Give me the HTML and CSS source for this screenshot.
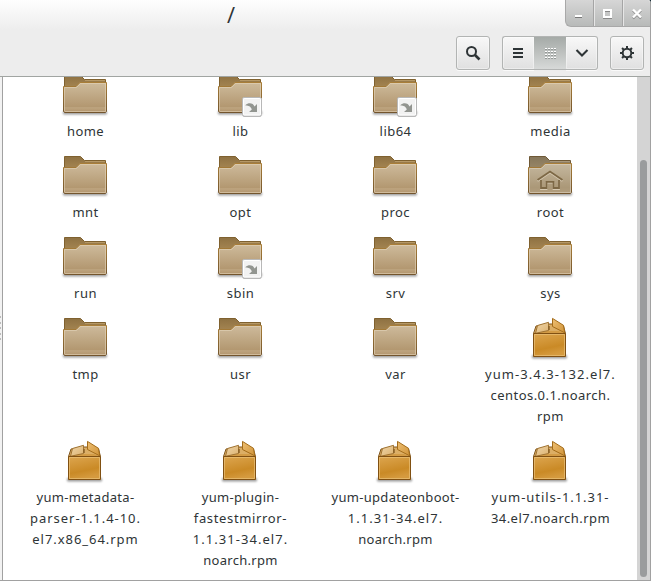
FILE: index.html
```html
<!DOCTYPE html>
<html lang="en">
<head>
<meta charset="utf-8">
<title>/</title>
<link rel="stylesheet" href="styles.css">
</head>
<body>
<svg class="defs" width="0" height="0" aria-hidden="true">
  <defs>
    <linearGradient id="back" x2="0" y2="1"><stop offset="0" stop-color="#8e7142"/><stop offset=".4" stop-color="#a88854"/></linearGradient>
    <linearGradient id="back-home" x2="0" y2="1"><stop offset="0" stop-color="#85765a"/><stop offset=".4" stop-color="#9a8868"/></linearGradient>
    <linearGradient id="front" x2="0" y2="1"><stop offset="0" stop-color="#cebb9c"/><stop offset=".8" stop-color="#b39871"/><stop offset=".84" stop-color="#bda47f"/><stop offset="1" stop-color="#b1936b"/></linearGradient>
    <linearGradient id="front-home" x2="0" y2="1"><stop offset="0" stop-color="#c5b89f"/><stop offset=".8" stop-color="#ab9878"/><stop offset="1" stop-color="#b29e7e"/></linearGradient>
    <linearGradient id="edge" x2="0" y2="1"><stop offset="0" stop-color="#a97e38"/><stop offset="1" stop-color="#73552d"/></linearGradient>
    <linearGradient id="box" x2=".3" y2="1"><stop offset="0" stop-color="#dda650"/><stop offset=".7" stop-color="#ca8a26"/><stop offset="1" stop-color="#d59a3e"/></linearGradient>
    <linearGradient id="flap" x2="1" y2="1"><stop offset="0" stop-color="#efd5a8"/><stop offset="1" stop-color="#dcb271"/></linearGradient>
    <linearGradient id="flap-right" x2="1" y2="1"><stop offset="0" stop-color="#eebf72"/><stop offset="1" stop-color="#cf9339"/></linearGradient>
    <filter id="soft" x="-20%" y="-100%" width="140%" height="300%"><feGaussianBlur stdDeviation="1"/></filter>
    <symbol id="folder" viewBox="0 0 48 48">
      <rect x="2" y="41" width="44" height="3.5" rx="1" fill="#000" opacity=".4" filter="url(#soft)"/>
      <path d="M3.500 40V5.500H19.500L23.500 9.500H44.500V40Z" fill="url(#back)" stroke="#7f612f"/>
      <path d="M24 10.500H44" stroke="#b69865"/>
      <path d="M2.500 16.500H15L19 12.500H45.500V41.500L44.500 42.500H3.500L2.500 41.500Z" fill="url(#front)" stroke="url(#edge)"/>
      <path d="M3.500 41V17.500H15.500L19.500 13.500H44.500V41.500H4" fill="none" stroke="#e3d3b9" opacity=".6"/>
    </symbol>
    <symbol id="home" viewBox="0 0 48 48">
      <rect x="2" y="41" width="44" height="3.500" rx="1" fill="#000" opacity=".4" filter="url(#soft)"/>
      <path d="M3.500 40V5.500H19.500L23.500 9.500H44.500V40Z" fill="url(#back-home)" stroke="#6f5936"/>
      <path d="M24 10.500H44" stroke="#a8977a"/>
      <path d="M2.500 16.500H15L19 12.500H45.500V41.500L44.500 42.500H3.500L2.500 41.500Z" fill="url(#front-home)" stroke="url(#edge)"/>
      <path d="M3.500 41V17.500H15.500L19.500 13.500H44.500V41.500H4" fill="none" stroke="#ddd2bf" opacity=".6"/>
      <g fill="none" stroke-width="1.800">
        <path d="M11.500 30 24 21.500 36.500 30M15 29.500V38H20.500V31.500H27.500V38H33V29.500" stroke="#d6c9b2"/>
        <path d="M11.500 29 24 20.500 36.500 29M15 29V37H20.500V30.800H27.500V37H33V29" stroke="#7d6845"/>
      </g>
    </symbol>
    <symbol id="package" viewBox="0 0 48 48">
      <rect x="6" y="42" width="35" height="3.500" rx="1" fill="#000" opacity=".4" filter="url(#soft)"/>
      <path d="M7.500 20.500 10 13 22 11H28L37.500 13 39.500 20.500Z" fill="#dcae65" stroke="#80571f"/>
      <path d="M10 20 16 18H33L38 20Z" fill="#d39b45"/>
      <path d="M9.500 20.300 11.500 12.500 22.500 9.300V17.500Z" fill="url(#flap)" stroke="#a17433"/>
      <path d="M23.100 13V17" stroke="#76501c"/>
      <path d="M26.500 5.400 37.500 12.300 38.700 19.800 26.500 13.500Z" fill="url(#flap-right)" stroke="#a36b18"/>
      <path d="M7.500 20.500H39.500V43.500H7.500Z" fill="url(#box)" stroke="#805012"/>
      <path d="M8.500 21.500H38.500V42.500H8.500Z" fill="none" stroke="#edc47e" opacity=".65"/>
    </symbol>
    <symbol id="link" viewBox="0 0 48 48">
      <rect x="26.500" y="28.500" width="19" height="18.500" rx="2" fill="#777" opacity=".5"/>
      <rect x="26.500" y="27.500" width="19" height="18.500" rx="1.500" fill="#f2f2f2" stroke="#b8b8b8"/>
      <rect x="27.500" y="28.500" width="17" height="16.500" rx="1" fill="none" stroke="#fff"/>
      <path d="M29.500 35C32.500 32 37.500 33 38.500 36.500L41 34V42H33L35.800 39.500C34.500 36 32 35.500 29.500 35.600Z" fill="#929590"/>
    </symbol>
  </defs>
</svg>

<div class="window">
  <header class="header">
    <div class="titlebar">
      <h1 class="title">/</h1>
      <div class="controls">
        <button class="control" aria-label="Minimize"><svg width="28" height="27"><path d="M9 17.500H16" stroke="#777"/><path d="M9 16H16" stroke="#fff" stroke-width="2"/></svg></button>
        <button class="control" aria-label="Maximize"><svg width="28" height="27" fill="none" stroke-width="2"><path d="M9 11H16V18H9Z" stroke="#888"/><path d="M9 10H16V17H9Z" stroke="#fff"/></svg></button>
        <button class="control" aria-label="Close"><svg width="28" height="27" stroke-width="2.400"><path d="M9 10.500 17 18.500M17 10.500 9 18.500" stroke="#888"/><path d="M9 9.500 17 17.500M17 9.500 9 17.500" stroke="#fff"/></svg></button>
      </div>
    </div>
    <div class="toolbar">
      <button class="tool" aria-label="Search"><svg width="16" height="16" fill="none" stroke="#2e3436"><circle cx="6.500" cy="6.500" r="4.500" stroke-width="2"/><path d="M10 10 14.500 14.500" stroke-width="2.600"/></svg></button>
      <div class="group">
        <button class="tool" aria-label="List view"><svg width="16" height="16" stroke="#2e3436" stroke-width="2"><path d="M2 4H12M2 8H12M2 12H12"/></svg></button>
        <button class="tool active" aria-label="Icon view"><svg width="16" height="16" stroke-width="1" stroke-dasharray="2 1"><path d="M3 4.500H14M3 7.500H14M3 10.500H14M3 13.500H14" stroke="#949997"/><path d="M3 3.500H14M3 6.500H14M3 9.500H14M3 12.500H14" stroke="#fff"/></svg></button>
        <button class="tool" aria-label="View options"><svg width="16" height="16" fill="none" stroke="#2e3436" stroke-width="2.100"><path d="M2.500 5 8 10.500 13.500 5"/></svg></button>
      </div>
      <button class="tool" aria-label="Settings"><svg width="16" height="16" fill="none" stroke="#2e3436" stroke-width="2"><circle cx="8" cy="8" r="4.300"/><path d="M8 1V4M8 12V15M1 8H4M12 8H15M3.050 3.050 5 5M11 11 12.950 12.950M12.950 3.050 11 5M5 11 3.050 12.950"/></svg></button>
    </div>
  </header>

  <div class="body">
    <div class="pane-handle"><i></i><i></i><i></i><i></i><i></i></div>
    <main class="view">
      <ul class="files">
        <li class="file"><svg><use href="#folder"/></svg><span>home</span></li>
        <li class="file"><svg><use href="#folder"/><use href="#link"/></svg><span>lib</span></li>
        <li class="file"><svg><use href="#folder"/><use href="#link"/></svg><span>lib64</span></li>
        <li class="file"><svg><use href="#folder"/></svg><span>media</span></li>
        <li class="file"><svg><use href="#folder"/></svg><span>mnt</span></li>
        <li class="file"><svg><use href="#folder"/></svg><span>opt</span></li>
        <li class="file"><svg><use href="#folder"/></svg><span>proc</span></li>
        <li class="file"><svg><use href="#home"/></svg><span>root</span></li>
        <li class="file"><svg><use href="#folder"/></svg><span>run</span></li>
        <li class="file"><svg><use href="#folder"/><use href="#link"/></svg><span>sbin</span></li>
        <li class="file"><svg><use href="#folder"/></svg><span>srv</span></li>
        <li class="file"><svg><use href="#folder"/></svg><span>sys</span></li>
        <li class="file"><svg><use href="#folder"/></svg><span>tmp</span></li>
        <li class="file"><svg><use href="#folder"/></svg><span>usr</span></li>
        <li class="file"><svg><use href="#folder"/></svg><span>var</span></li>
        <li class="file"><svg><use href="#package"/></svg><span class="long"><b class="wide">yum-3.4.3-132.el7.</b><br>centos.0.1.noarch.<br>rpm</span></li>
        <li class="file"><svg><use href="#package"/></svg><span class="long"><b class="tight">yum-metadata-</b><br><b class="loose">parser-1.1.4-10.</b><br><b class="loose">el7.x86_64.rpm</b></span></li>
        <li class="file"><svg><use href="#package"/></svg><span class="long"><b class="tight">yum-plugin-</b><br><b class="mid">fastestmirror-</b><br><b class="wide">1.1.31-34.el7.</b><br><b class="tight">noarch.rpm</b></span></li>
        <li class="file"><svg><use href="#package"/></svg><span class="long"><b class="tight">yum-updateonboot-</b><br><b class="wide">1.1.31-34.el7.</b><br><b class="tight">noarch.rpm</b></span></li>
        <li class="file"><svg><use href="#package"/></svg><span class="long"><b class="loose">yum-utils-1.1.31-</b><br>34.el7.noarch.rpm</span></li>
      </ul>
    </main>
    <div class="scrollbar"><div class="thumb"></div></div>
  </div>
</div>
</body>
</html>
```
FILE: styles.css
```css
* { box-sizing: border-box; }

body {
  margin: 0;
  overflow: hidden;
  background: #0d2530;
  color: #2e3436;
  font-family: "Noto Sans", "Open Sans", sans-serif;
}

.defs { position: absolute; }

.window {
  display: flex;
  flex-direction: column;
  width: 651px;
  height: 581px;
  background: #fff;
  border-right: 1px solid #a1a1a1;
  border-bottom: 1px solid #a1a1a1;
  border-top-right-radius: 3px;
  overflow: hidden;
}

.header {
  flex: none;
  height: 77px;
  background: linear-gradient(#fefefe, #ededed 30px);
  border-bottom: 1px solid #a1a5a2;
}

.titlebar {
  display: flex;
  justify-content: space-between;
  height: 30px;
}

.title {
  margin: 0;
  padding-left: 227px;
  font: 400 22px/29px "Open Sans", "Noto Sans", sans-serif;
}

.controls {
  display: flex;
  width: 85px;
  height: 27px;
  background: linear-gradient(#d6d6d6, #b8bab9);
  border: 1px solid #a8a8a8;
  border-width: 0 0 1px 1px;
  border-bottom-left-radius: 6px;
}

.control {
  flex: 1;
  display: flex;
  padding: 0;
  border: 0;
  background: none;
}

.control + .control { border-left: 1px solid #e6e6e6; box-shadow: -1px 0 #a5a5a5; }

.toolbar {
  display: flex;
  justify-content: flex-end;
  gap: 12px;
  padding: 6px 6px 0 0;
}

.tool {
  display: flex;
  align-items: center;
  justify-content: center;
  width: 34px;
  height: 34px;
  padding: 0;
  border: 1px solid #b2b4b3;
  border-radius: 3px;
  background: linear-gradient(#f8f8f8, #e0e0e0);
  box-shadow: inset 0 0 0 1px #ffffff66, 0 1px #fafafa;
}

.group { display: flex; }
.group .tool { width: 32px; border-radius: 0; border-width: 1px 0; }
.group .tool:first-child { border-left-width: 1px; border-radius: 3px 0 0 3px; }
.group .tool:last-child { border-right-width: 1px; border-radius: 0 3px 3px 0; }
.group .active { background: linear-gradient(#a5aaa7, #d7d9d8); box-shadow: none; }

.body { flex: 1; min-height: 0; display: flex; }

.pane-handle {
  width: 3px;
  padding-top: 239px;
  background: #f2f2f2;
  border-right: 1px solid #a1a1a1;
}

.pane-handle i {
  display: block;
  width: 1px;
  height: 2px;
  margin-bottom: 3.5px;
  background: #bbb;
}

.view { width: 634px; overflow: hidden; }

.files {
  display: grid;
  grid-template-columns: repeat(4, 155px);
  row-gap: 9px;
  margin: -7px 0 0 4.500px;
  padding: 0;
  list-style: none;
}

.file {
  display: flex;
  flex-direction: column;
  align-items: center;
  gap: 3px;
  font-size: 13px;
  line-height: 21px;
  letter-spacing: .45px;
  text-align: center;
  white-space: nowrap;
}

.file svg { width: 48px; height: 48px; }
.file span { padding-left: 1px; }
.file b { font-weight: 400; }
.file .tight { letter-spacing: .3px; }
.file .mid { letter-spacing: .65px; }
.file .loose { letter-spacing: .95px; }
.file .wide { letter-spacing: 1.05px; }

.scrollbar {
  width: 13px;
  padding: 83px 3px 3px;
  background: #d4d4d4;
}

.thumb { height: 100%; border-radius: 4px; background: #9a9c9d; }
```
